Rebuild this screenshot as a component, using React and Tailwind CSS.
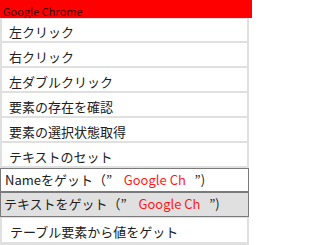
export default function App() {
  const items = ['右クリック', '左ダブルクリック', '要素の存在を確認', '要素の選択状態取得', 'テキストのセット'];

  return (
    <div className="w-[252px] h-[245px] bg-white overflow-hidden text-[13px] text-[#202020] font-['Noto_Sans_CJK_JP','Noto_Sans',sans-serif]">
      <div className="h-[18px] overflow-hidden bg-[#ff0000] pl-[3px] pt-[2px] text-[11px] leading-[18px] text-[#3a0000]">
        Google Chrome
      </div>
      <div className="w-[249px] h-[227px] bg-[#e0e0e0] pt-[1px] px-[2px] flex flex-col">
        <div className="h-[22px] bg-white pl-[7px] pt-[3px] leading-[19px]">左クリック</div>
        {items.map((label) => (
          <div key={label} className="mt-[2px] h-[23px] bg-white pl-[7px] pt-[4px] leading-[19px]">
            {label}
          </div>
        ))}
        <div className="mt-[2px] -ml-[2px] w-[249px] h-[24px] bg-white border border-[#7a7a7a] pl-[4px] pt-[1px] leading-[19px] whitespace-pre">
          Nameをゲット（”    <span className="text-[#ff1a1a]">Google Ch</span>   ”)
        </div>
        <div className="-ml-[2px] w-[249px] h-[25px] bg-[#e0e0e0] border border-[#7a7a7a] pl-[3px] pt-[1px] leading-[20px] whitespace-pre">
          テキストをゲット（”    <span className="text-[#ff1a1a]">Google Ch</span>   ”)
        </div>
        <div className="mt-[1px] h-[24px] bg-white pl-[8px] pt-[4px] leading-[19px]">テーブル要素から値をゲット</div>
      </div>
    </div>
  );
}
